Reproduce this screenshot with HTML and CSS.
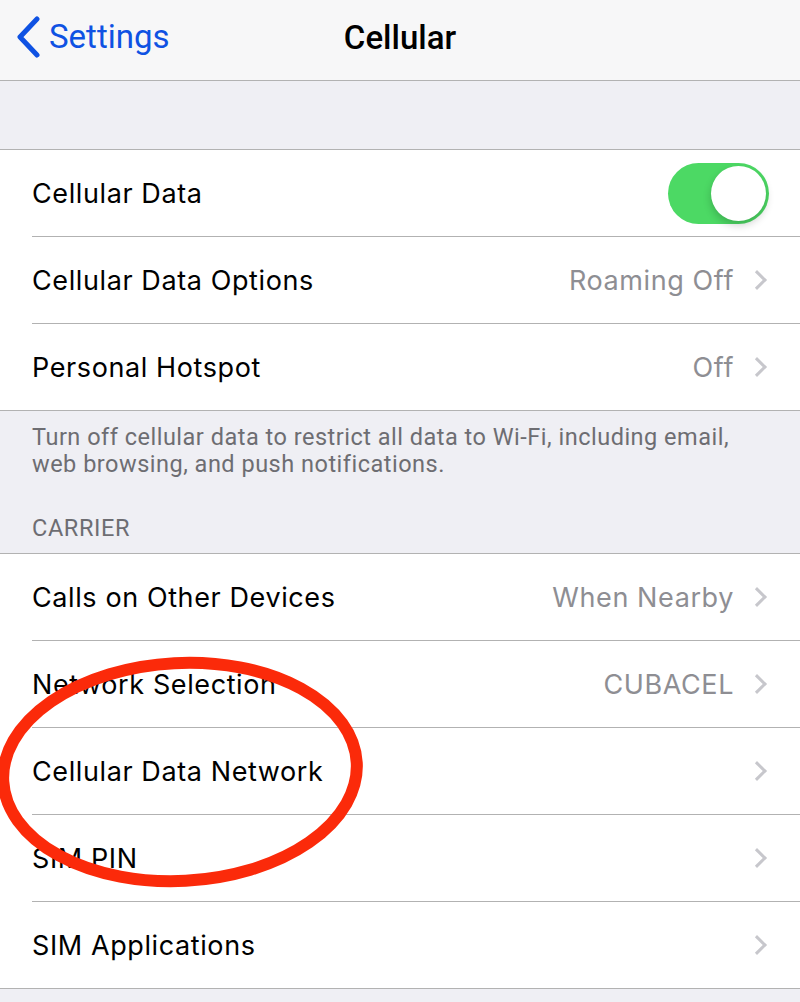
FILE: index.html
```html
<!DOCTYPE html>
<html lang="en">
<head>
    <meta charset="UTF-8">
    <meta name="viewport" content="width=device-width, initial-scale=1.0">
    <title>Cellular</title>
    <link rel="stylesheet" href="styles.css">
</head>
<body>
    <header class="navbar">
        <a class="back" href="#">
            <svg class="back-icon" width="26" height="42" viewBox="0 0 26 42">
                <path d="M22 3 L5 21 L22 39" fill="none" stroke="#0f52e3" stroke-width="5" stroke-linecap="round" stroke-linejoin="round"/>
            </svg>
            <span>Settings</span>
        </a>
        <h1>Cellular</h1>
    </header>

    <main class="content">
        <div class="spacer"></div>

        <ul class="group">
            <li class="row">
                <span class="label">Cellular Data</span>
                <span class="toggle"><span class="knob"></span></span>
            </li>
            <li class="row">
                <span class="label">Cellular Data Options</span>
                <span class="value">Roaming Off</span>
                <span class="chevron"></span>
            </li>
            <li class="row">
                <span class="label">Personal Hotspot</span>
                <span class="value">Off</span>
                <span class="chevron"></span>
            </li>
        </ul>

        <p class="note">Turn off cellular data to restrict all data to Wi-Fi, including email, web browsing, and push notifications.</p>
        <h2 class="section-title">CARRIER</h2>

        <ul class="group">
            <li class="row">
                <span class="label">Calls on Other Devices</span>
                <span class="value">When Nearby</span>
                <span class="chevron"></span>
            </li>
            <li class="row">
                <span class="label">Network Selection</span>
                <span class="value">CUBACEL</span>
                <span class="chevron"></span>
            </li>
            <li class="row">
                <span class="label">Cellular Data Network</span>
                <span class="chevron"></span>
            </li>
            <li class="row">
                <span class="label">SIM PIN</span>
                <span class="chevron"></span>
            </li>
            <li class="row">
                <span class="label">SIM Applications</span>
                <span class="chevron"></span>
            </li>
        </ul>
    </main>

    <!-- marca vermelha desenhada por cima -->
    <svg class="circle-mark" width="400" height="260" viewBox="0 0 400 260">
        <ellipse cx="180" cy="116" rx="177" ry="109" transform="rotate(-3 180 116)" fill="none" stroke="#fb2a0a" stroke-width="12"/>
    </svg>
</body>
</html>
```

FILE: styles.css
```css
* {
    box-sizing: border-box;
    margin: 0;
    padding: 0;
}

body {
    font-family: 'Inter', 'Roboto', sans-serif;
    background-color: #efeff4;
    color: #000;
    position: relative;
    overflow: hidden;
    height: 1002px;
}

.navbar {
    height: 81px;
    background-color: #f7f7f8;
    border-bottom: 1px solid #b2b2b2;
    position: relative;
    display: flex;
    align-items: center;
    justify-content: center;
}

.back {
    position: absolute;
    left: 15px;
    top: 16px;
    display: flex;
    align-items: center;
    text-decoration: none;
    color: #0f52e3;
    font-family: 'Roboto', sans-serif;
    font-size: 33px;
}

.back span {
    margin-left: 8px;
    margin-top: -1px;
}

.navbar h1 {
    font-size: 33px;
    font-weight: 500;
    font-family: 'Roboto', sans-serif;
    margin-top: -6px;
}

.spacer {
    height: 68px;
}

.group {
    list-style: none;
    background-color: #fff;
    border-top: 1px solid #b2b2b2;
    border-bottom: 1px solid #b2b2b2;
}

.row {
    height: 87px;
    display: flex;
    align-items: center;
    padding-right: 32px;
    margin-left: 32px;
    border-bottom: 1px solid #b2b2b2;
    font-size: 27px;
    letter-spacing: 0.6px;
}

.row:last-child {
    border-bottom: none;
    height: 86px;
}

.label {
    flex: 1;
}

.value {
    color: #8e8e93;
    margin-right: 16px;
}

.chevron {
    width: 14px;
    height: 14px;
    border-top: 3px solid #c7c7cc;
    border-right: 3px solid #c7c7cc;
    transform: rotate(45deg);
    margin-right: 4px;
}

.toggle {
    width: 101px;
    height: 61px;
    border-radius: 31px;
    background-color: #4cd964;
    position: relative;
    margin-right: -1px;
}

.knob {
    position: absolute;
    right: 3px;
    top: 3px;
    width: 55px;
    height: 55px;
    border-radius: 50%;
    background-color: #fff;
    box-shadow: 0 4px 8px rgba(0, 0, 0, 0.2);
}

.note {
    font-family: 'Roboto', sans-serif;
    color: #6d6d72;
    font-size: 23.5px;
    letter-spacing: 0.5px;
    line-height: 27px;
    padding: 13px 30px 0 32px;
}

.section-title {
    font-family: 'Roboto', sans-serif;
    font-weight: 400;
    color: #6d6d72;
    font-size: 23.5px;
    letter-spacing: 0.6px;
    padding: 36px 32px 11px;
}

.circle-mark {
    position: absolute;
    left: 0;
    top: 656px;
}
```
